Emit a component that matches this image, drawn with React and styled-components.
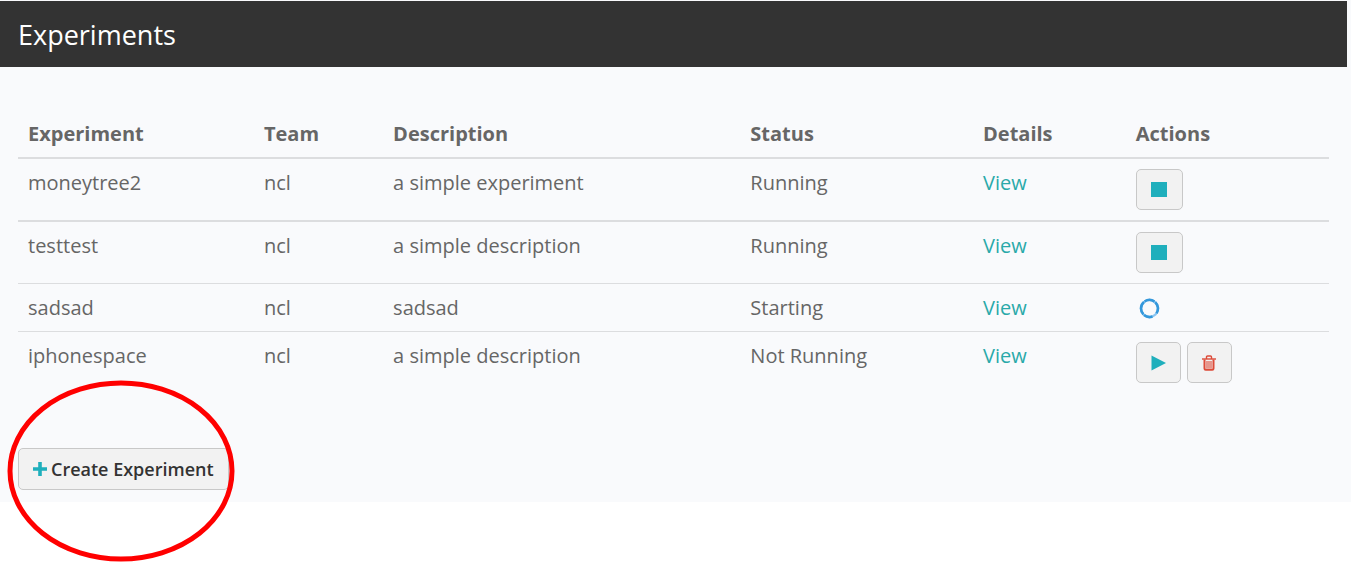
import React from 'react';
import styled, { createGlobalStyle } from 'styled-components';

const GlobalStyle = createGlobalStyle`
  *, *::before, *::after { box-sizing: border-box; }
  body {
    margin: 0;
    background: #fff;
    color: #666;
    font: 400 20px/27px "Open Sans", "Noto Sans", sans-serif;
  }
`;

const Page = styled.div`
  min-height: 100vh;
`;

const Panel = styled.main`
  padding: 1px 0 12px;
  background: #f9fafc;
`;

const Header = styled.header`
  margin-right: 4px;
  padding: 16px 18px 14px;
  background: #333;
`;

const Title = styled.h1`
  margin: 0;
  color: #fff;
  font-size: 27px;
  font-weight: 400;
  line-height: 36px;
`;

const Content = styled.section`
  padding: 43px 22px 0 18px;
`;

const Table = styled.table`
  width: 100%;
  table-layout: fixed;
  border-collapse: separate;
  border-spacing: 0;
  text-align: left;
`;

const HeadCell = styled.th`
  width: ${({ $width }) => $width};
  padding: 10px;
  font-weight: 700;
`;

const Cell = styled.td`
  padding: 10px;
  border-top: ${({ $rule }) => $rule}px solid #dcdddf;
  vertical-align: top;
`;

const ViewLink = styled.a`
  color: #2aa9a9;
  text-decoration: none;
`;

const Actions = styled.div`
  display: flex;
  gap: 6px;
`;

const Button = styled.button`
  display: inline-flex;
  align-items: center;
  justify-content: center;
  gap: 4px;
  height: ${({ $tall }) => ($tall ? 42 : 41)}px;
  min-width: ${({ $wide }) => ($wide ? 47 : 45)}px;
  padding: 0 14px;
  border: 1px solid #c8c8c8;
  border-radius: 5px;
  background: #f2f2f2;
  color: #333;
  font: 600 18px/24px "Open Sans", "Noto Sans", sans-serif;
  white-space: nowrap;
  cursor: pointer;
`;

const Icon = styled.svg`
  display: block;
  flex: none;
`;

const Spinner = styled(Icon)`
  margin: 4px 3px 0;
`;

const Footer = styled.div`
  position: relative;
  display: flex;
  margin-top: 55px;
`;

const Highlight = styled.svg`
  position: absolute;
  top: -69px;
  left: -12px;
  pointer-events: none;
`;

const StopIcon = () => (
  <Icon width="16" height="16" viewBox="0 0 16 16" aria-hidden="true">
    <path d="M0 0h16v15H0z" fill="#1fafbc" />
  </Icon>
);

const PlayIcon = () => (
  <Icon width="15" height="16" viewBox="0 0 15 16" aria-hidden="true">
    <path d="M0.5 0.5 15 8 0.5 15.5Z" fill="#1fafbc" />
  </Icon>
);

const TrashIcon = () => (
  <Icon width="14" height="16" viewBox="0 0 14 16" aria-hidden="true">
    <g fill="none" stroke="#dd4b39">
      <path d="M0 4h14" strokeWidth="1.4" />
      <path d="M4.5 4V1.900Q4.500 1 5.500 1h3q1 0 1 .9V4" strokeWidth="1.4" />
      <path d="M2.500 4.500v9q0 1.200 1.200 1.200h6.600q1.200 0 1.200-1.200v-9" strokeWidth="2" />
      <path d="M5 6v7.500M7 6v7.500M9 6v7.500" strokeWidth="1.100" />
    </g>
  </Icon>
);

const PlusIcon = () => (
  <Icon width="14" height="14" viewBox="0 0 14 14" aria-hidden="true">
    <path d="M0 7h14M7 0v14" stroke="#1fafbc" strokeWidth="3.6" />
  </Icon>
);

const LoadingIcon = () => (
  <Spinner width="21" height="21" viewBox="0 0 21 21" role="img" aria-label="Starting">
    <circle cx="10.500" cy="10.500" r="8.500" fill="none" stroke="#8cc6f2" strokeWidth="2.400" />
    <path
      d="M13.500 18.500A8.500 8.500 0 0 1 5 17M4.400 16.400A8.500 8.500 0 0 1 5 4M5.600 3.500A8.500 8.500 0 0 1 15.500 3.600M16.200 4.200A8.500 8.500 0 0 1 17.500 15.200"
      fill="none"
      stroke="#3498db"
      strokeWidth="2.600"
    />
  </Spinner>
);

const columns = [
  ['Experiment', '18%'],
  ['Team', '9.85%'],
  ['Description', '27.25%'],
  ['Status', '17.75%'],
  ['Details', '11.65%'],
  ['Actions', 'auto'],
];

const experiments = [
  { name: 'moneytree2', team: 'ncl', description: 'a simple experiment', status: 'Running', rule: 2 },
  { name: 'testtest', team: 'ncl', description: 'a simple description', status: 'Running', rule: 2 },
  { name: 'sadsad', team: 'ncl', description: 'sadsad', status: 'Starting', rule: 1 },
  { name: 'iphonespace', team: 'ncl', description: 'a simple description', status: 'Not Running', rule: 1 },
];

function RowActions({ status }) {
  if (status === 'Running') {
    return (
      <Button type="button" $wide aria-label="Stop experiment">
        <StopIcon />
      </Button>
    );
  }
  if (status === 'Starting') return <LoadingIcon />;
  return (
    <>
      <Button type="button" aria-label="Start experiment">
        <PlayIcon />
      </Button>
      <Button type="button" aria-label="Delete experiment">
        <TrashIcon />
      </Button>
    </>
  );
}

export default function App() {
  return (
    <Page>
      <GlobalStyle />
      <Panel>
        <Header>
          <Title>Experiments</Title>
        </Header>
        <Content>
          <Table>
            <thead>
              <tr>
                {columns.map(([label, width]) => (
                  <HeadCell key={label} scope="col" $width={width}>
                    {label}
                  </HeadCell>
                ))}
              </tr>
            </thead>
            <tbody>
              {experiments.map(({ name, team, description, status, rule }) => (
                <tr key={name}>
                  <Cell $rule={rule}>{name}</Cell>
                  <Cell $rule={rule}>{team}</Cell>
                  <Cell $rule={rule}>{description}</Cell>
                  <Cell $rule={rule}>{status}</Cell>
                  <Cell $rule={rule}>
                    <ViewLink href="#view">View</ViewLink>
                  </Cell>
                  <Cell $rule={rule}>
                    <Actions>
                      <RowActions status={status} />
                    </Actions>
                  </Cell>
                </tr>
              ))}
            </tbody>
          </Table>
          <Footer>
            <Button type="button" $tall>
              <PlusIcon />
              Create Experiment
            </Button>
            <Highlight width="230" height="183" viewBox="0 0 230 183" aria-hidden="true">
              <ellipse cx="115" cy="92" rx="111" ry="88" fill="none" stroke="#f00" strokeWidth="5" />
            </Highlight>
          </Footer>
        </Content>
      </Panel>
    </Page>
  );
}
